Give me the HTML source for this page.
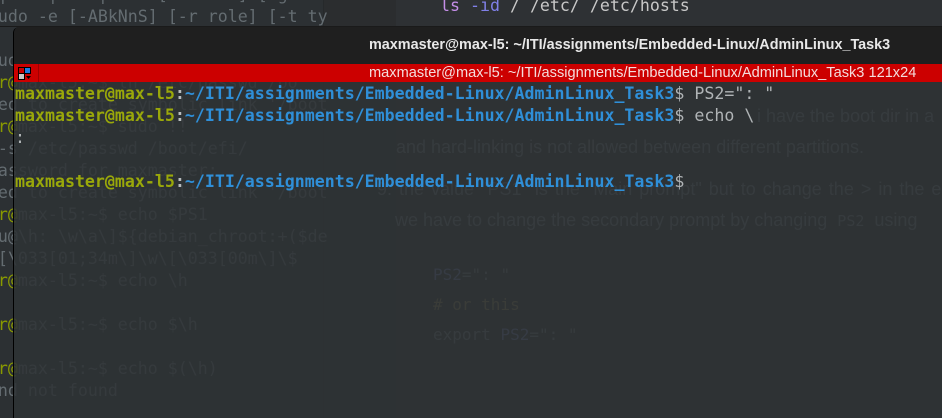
<!DOCTYPE html>
<html><head><meta charset="utf-8"><style>
*{margin:0;padding:0;box-sizing:border-box}
body{width:942px;height:418px;overflow:hidden;background:#2c3033;position:relative;font-family:"Liberation Sans",sans-serif}
.bg{position:absolute;left:0;top:0;width:942px;height:418px;overflow:hidden}
.bt{position:absolute;font-family:"DejaVu Sans Mono",monospace;font-size:16.6px;color:#646c71;white-space:pre;line-height:22px}
.ed{position:absolute;font-size:18px;color:#70757a;white-space:pre}
.code{position:absolute;font-family:"DejaVu Sans Mono",monospace;font-size:16px;white-space:pre;color:#70757a}
.win{position:absolute;left:13px;top:27px;right:0;bottom:0;border-left:1px solid #000;border-top-left-radius:6px;overflow:hidden}
.title{height:37px;background:#1f1f1f;color:#e8e8e8;font-weight:bold;font-size:14.4px;line-height:37px;padding-left:355px;white-space:pre}
.red{height:18px;background:#cc0000;color:#f4dcdc;font-size:14.6px;line-height:18px;padding-left:355px;white-space:pre;position:relative}
.term{position:absolute;top:55px;left:0;right:0;bottom:0;background:rgba(46,50,53,0.87)}
.tl{position:absolute;left:1px;font-family:"DejaVu Sans Mono",monospace;font-size:16.6px;font-weight:bold;white-space:pre;line-height:22px;color:#b8bcbe}
.g{color:#9aa80a}.bl{color:#2f8fd8}.n{font-weight:normal;color:#b0b4b6}
</style></head><body>
<div class="bg">
  <div style="position:absolute;left:323px;top:0;width:1px;height:418px;background:#26292b"></div>
  <div style="position:absolute;left:324px;top:0;width:72px;height:26px;background:#2b2d2f"></div>
  <div style="position:absolute;left:396px;top:0;width:546px;height:418px;background:#2e3134"></div>
  <div style="position:absolute;left:0;top:26px;width:942px;height:1px;background:#1a1a1a"></div>
  <div class="bt" style="left:-82px;top:-16px">sudo -h | -K | -k | -V  [-u user] [-g
       sudo -e [-ABkNnS] [-r role] [-t ty
              [-u user] file ...
usage: sudoedit [-AknS] [-r role] [-t
<span style="color:#8a9a00">maxmaster@</span>max-l5:~$ ln /etc/passwd /bo
ln: failed to create symbolic link '/boot
<span style="color:#8a9a00">maxmaster@</span>max-l5:~$ sudo !!
sudo ln -s /etc/passwd /boot/efi/
[sudo] password for maxmaster:
ln: failed to create symbolic link '/boot
<span style="color:#8a9a00">maxmaster@</span>max-l5:~$ echo $PS1
\[\e]0;\u@\h: \w\a\]${debian_chroot:+($de
\]\u@\h\[\033[01;34m\]\w\[\033[00m\]\$
<span style="color:#8a9a00">maxmaster@</span>max-l5:~$ echo \h

<span style="color:#8a9a00">maxmaster@</span>max-l5:~$ echo $\h

<span style="color:#8a9a00">maxmaster@</span>max-l5:~$ echo $(\h)
h: command not found</div>
  <div class="code" style="left:440px;top:-4px;font-size:16.6px;color:#c8c8c8"><span style="color:#c58ee8">ls</span> <span style="color:#8080e8">-id</span> / /etc/ /etc/hosts</div>
  <div class="ed" style="left:757px;top:106px">i have the boot dir in a</div>
  <div class="ed" style="left:396px;top:137px">and hard-linking is not allowed between different partitions.</div>
  <div class="ed" style="left:377px;top:179px;word-spacing:2px">9. the value "PS1" is the "Main prompt" but to change the &gt; in the ec</div>
  <div class="ed" style="left:395px;top:210px">we have to change the secondary prompt by changing  <span style="font-family:'DejaVu Sans Mono',monospace;font-size:15px">PS2</span>  using</div>
  <div class="code" style="left:433px;top:265px"><span style="color:#6a78a8">PS2</span>=": "</div>
  <div class="code" style="left:433px;top:295px;color:#8a7a50"># or this</div>
  <div class="code" style="left:433px;top:325px">export <span style="color:#6a78a8">PS2</span>=": "</div>
</div>
<div class="win">
  <div class="title">maxmaster@max-l5: ~/ITI/assignments/Embedded-Linux/AdminLinux_Task3</div>
  <div class="red">maxmaster@max-l5: ~/ITI/assignments/Embedded-Linux/AdminLinux_Task3 121x24
    <div style="position:absolute;left:24px;top:0;width:1px;height:18px;background:#a00000"></div>
    <svg style="position:absolute;left:4px;top:3px" width="14" height="13" viewBox="0 0 14 13">
      <rect x="0.5" y="0.5" width="6" height="6" fill="#cc0000" stroke="#000"/>
      <rect x="6.5" y="0.5" width="6" height="6" fill="#1e7be0" stroke="#000"/>
      <rect x="0.5" y="6.5" width="6" height="6" fill="#c8c8c8" stroke="#000"/>
      <path d="M8 9h5l-2.5 3z" fill="#000"/>
    </svg>
  </div>
  <div class="term">
    <div class="tl" style="top:1px"><span class="g">maxmaster@max-l5</span>:<span class="bl">~/ITI/assignments/Embedded-Linux/AdminLinux_Task3</span><span class="n">$ PS2=": "</span></div>
    <div class="tl" style="top:23px"><span class="g">maxmaster@max-l5</span>:<span class="bl">~/ITI/assignments/Embedded-Linux/AdminLinux_Task3</span><span class="n">$ echo \</span></div>
    <div class="tl" style="top:45px"><span class="n">:</span></div>
    <div class="tl" style="top:89px"><span class="g">maxmaster@max-l5</span>:<span class="bl">~/ITI/assignments/Embedded-Linux/AdminLinux_Task3</span><span class="n">$</span></div>
  </div>
</div>
</body></html>
